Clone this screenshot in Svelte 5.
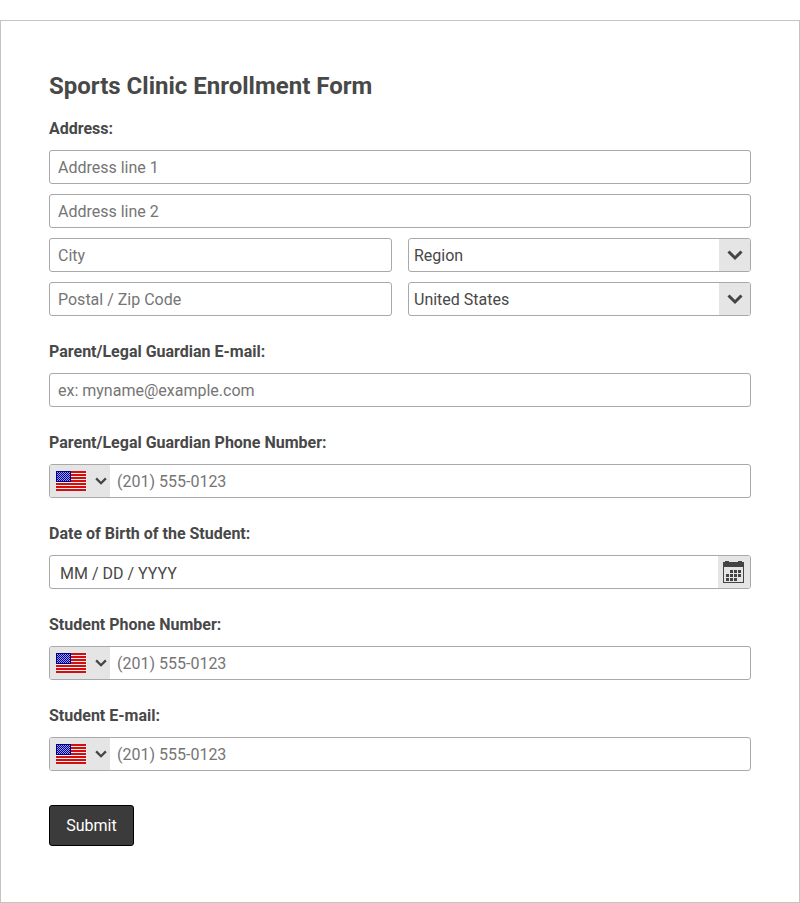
<script lang="ts">
	let address1 = $state('')
	let address2 = $state('')
	let city = $state('')
	let zip = $state('')
	let region = $state('')
	let country = $state('US')
	let email = $state('')
	let birthDate = $state('')
	let phones = $state({ guardian: '', student: '', studentEmail: '' })

	const regions = ['Alabama', 'Alaska', 'Arizona', 'California', 'Florida', 'New York', 'Texas']
	// seven red stripes, top one first
	const stripes = [0, 1, 2, 3, 4, 5, 6]
	const starRows = [1, 2, 3, 4, 5, 6, 7, 8, 9]
	const days = [
		[7, 9], [11, 9], [15, 9],
		[3, 13], [7, 13], [11, 13], [15, 13],
		[3, 17], [7, 17], [11, 17]
	]

	function handleSubmit(e: Event) {
		e.preventDefault()
	}
</script>

{#snippet chevron(size)}
	<svg class="chevron" width={size} height={size} viewBox="0 0 16 16" aria-hidden="true">
		<path d="M1.5 4.500 8 11l6.500-6.500" />
	</svg>
{/snippet}

{#snippet phone(id, label, key)}
	<div class="field">
		<label class="title" for={id}>{label}</label>
		<div class="box">
			<button type="button" class="flag" aria-label="Select country code">
				<svg width="30" height="20" viewBox="0 0 30 20" aria-hidden="true">
					<rect width="30" height="20" fill="#fdecec" />
					{#each stripes as i}
						<rect y={i * 3} width="30" height="2" fill="#cf1010" />
					{/each}
					<rect width="15" height="11" fill="#000090" />
					{#each starRows as y, r}
						<path d="M{r % 2 ? 2 : 1} {y + 0.5}H14" stroke="#9c9cf0" stroke-dasharray="1 1" />
					{/each}
				</svg>
				{@render chevron(12)}
			</button>
			<input {id} type="tel" placeholder="(201) 555-0123" bind:value={phones[key]} />
		</div>
	</div>
{/snippet}

<form onsubmit={handleSubmit}>
	<h1>Sports Clinic Enrollment Form</h1>

	<div class="field">
		<label class="title" for="address1">Address:</label>
		<div class="address">
			<input class="box wide" id="address1" type="text" placeholder="Address line 1" bind:value={address1} />
			<input class="box wide" type="text" placeholder="Address line 2" aria-label="Address line 2" bind:value={address2} />
			<input class="box" type="text" placeholder="City" aria-label="City" bind:value={city} />
			<div class="box select">
				<select aria-label="Region" bind:value={region}>
					<option value="">Region</option>
					{#each regions as name}
						<option>{name}</option>
					{/each}
				</select>
				<span class="arrow">{@render chevron(16)}</span>
			</div>
			<input class="box" type="text" placeholder="Postal / Zip Code" aria-label="Postal / Zip Code" bind:value={zip} />
			<div class="box select">
				<select aria-label="Country" bind:value={country}>
					<option value="US">United States</option>
					<option value="CA">Canada</option>
				</select>
				<span class="arrow">{@render chevron(16)}</span>
			</div>
		</div>
	</div>

	<div class="field">
		<label class="title" for="email">Parent/Legal Guardian E-mail:</label>
		<input class="box" id="email" type="email" placeholder="ex: myname@example.com" bind:value={email} />
	</div>

	{@render phone('guardian-phone', 'Parent/Legal Guardian Phone Number:', 'guardian')}

	<div class="field">
		<label class="title" for="birth-date">Date of Birth of the Student:</label>
		<div class="box">
			<input class="date" id="birth-date" type="text" placeholder="MM / DD / YYYY" bind:value={birthDate} />
			<button type="button" class="calendar" aria-label="Open calendar">
				<svg width="21" height="22" viewBox="0 0 21 22" aria-hidden="true">
					<path d="M0 1h2V0h4v1h9V0h4v1h2v21H0zM1 6v15h19V6z" fill="#444" fill-rule="evenodd" />
					{#each days as [x, y]}
						<rect {x} {y} width="3" height="3" fill="#444" />
					{/each}
				</svg>
			</button>
		</div>
	</div>

	{@render phone('student-phone', 'Student Phone Number:', 'student')}
	{@render phone('student-email', 'Student E-mail:', 'studentEmail')}

	<button class="submit" type="submit">Submit</button>
</form>

<style>
	:global(body) {
		margin: 0;
		background: #fff;
	}

	form {
		box-sizing: border-box;
		margin-top: 20px;
		padding: 48px 48px 56px;
		border: 1px solid #c4c4c4;
		color: #484848;
		font: 16px/22px Roboto, sans-serif;
	}

	h1 {
		margin: 0 0 15px;
		font-size: 24px;
		line-height: 34px;
		font-weight: 700;
	}

	.field {
		margin-bottom: 25px;
	}

	.title {
		display: block;
		margin-bottom: 10px;
		font-weight: 700;
	}

	.address {
		display: grid;
		grid-template-columns: 1fr 1fr;
		gap: 10px 16px;
	}

	.wide {
		grid-column: 1 / -1;
	}

	.box {
		box-sizing: border-box;
		display: flex;
		width: 100%;
		height: 34px;
		border: 1px solid #a9a9a9;
		border-radius: 3px;
		background: #fff;
		overflow: hidden;
	}

	input,
	select,
	button {
		margin: 0;
		border: 0;
		background: none;
		color: inherit;
		font: inherit;
	}

	input {
		flex: 1;
		min-width: 0;
		padding: 0 8px;
	}

	input::placeholder {
		color: #757575;
		opacity: 1;
	}

	.date {
		padding: 3px 10px 0;
	}

	.date::placeholder {
		color: #484848;
	}

	/* the arrow shares the grid row with the select and lies on its right end */
	.select {
		display: grid;
		grid-template-columns: 1fr 31px;
		grid-template-rows: 100%;
	}

	select {
		grid-area: 1 / 1 / 2 / 3;
		appearance: none;
		padding: 2px 36px 0 5px;
		border-radius: 0;
	}

	.arrow {
		grid-area: 1 / 2;
		display: flex;
		align-items: center;
		justify-content: center;
		background: #e5e5e5;
		pointer-events: none;
	}

	.chevron {
		fill: none;
		stroke: #444;
		stroke-width: 3;
	}

	.flag {
		display: flex;
		align-items: center;
		justify-content: space-between;
		width: 60px;
		padding: 0 3px 0 6px;
		background: #e5e5e5;
	}

	.flag + input {
		padding: 2px 7px 0;
	}

	.calendar {
		display: flex;
		align-items: center;
		justify-content: center;
		width: 32px;
		padding: 0 2px 0 0;
		background: #e5e5e5;
	}

	.submit {
		display: block;
		min-width: 85px;
		height: 41px;
		margin-top: 34px;
		padding: 0 16px;
		border: 1px solid #000;
		border-radius: 3px;
		background: #3b3b3b;
		color: #fff;
	}
</style>
